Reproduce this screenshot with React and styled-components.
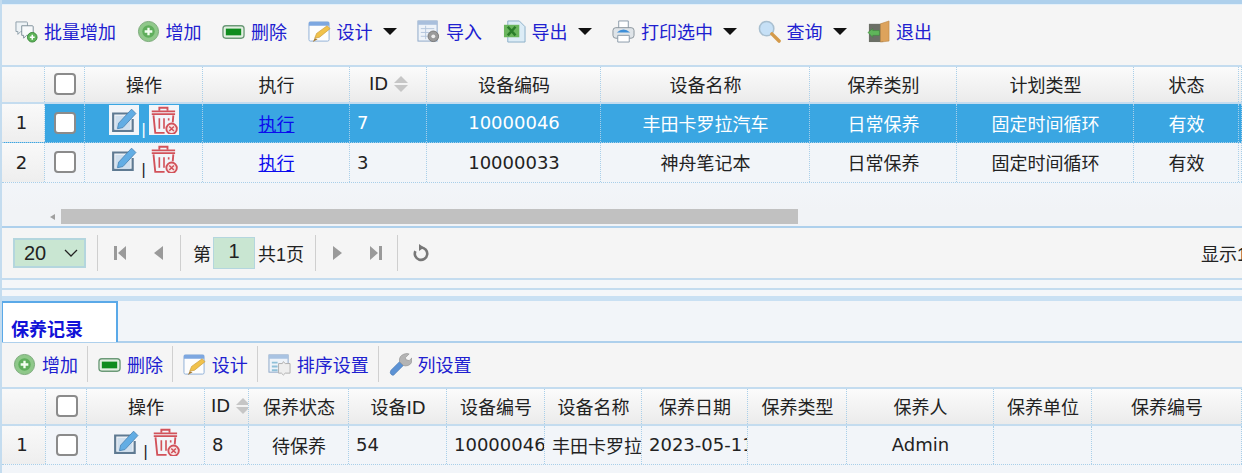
import React from 'react'
import styled, { createGlobalStyle, css } from 'styled-components'

const GlobalStyle = createGlobalStyle`
  html, body {
    margin: 0;
    width: 1242px;
    height: 473px;
    overflow: hidden;
    background: #f2f5f9;
    font-family: "DejaVu Sans", "Noto Sans CJK SC", sans-serif;
    font-size: 18px;
    color: #222;
  }
  * { box-sizing: border-box; }
`

const Page = styled.div`
  width: 1242px;
  height: 473px;
  overflow: hidden;
  border-left: 2px solid #c4dcef;
`
const TopStrip = styled.div`
  height: 5px;
  margin-left: -2px;
  background: #aed0ec;
  border-bottom: 1px solid #e4f0f9;
`
const Toolbar = styled.div`
  display: flex;
  align-items: ${p => (p.$compact ? 'center' : 'flex-start')};
  height: ${p => (p.$compact ? '46px' : '62px')};
  padding: ${p => (p.$compact ? '0 0 2px 11px' : '13px 0 0 13px')};
  gap: ${p => (p.$compact ? '0' : '20.5px')};
  background: #f5f5f5;
  border-bottom: 2px solid #c4dcef;
`
const ToolItem = styled.a`
  display: flex;
  align-items: center;
  gap: 6px;
  height: 26px;
  color: #2020d0;
  white-space: nowrap;
  flex-shrink: 0;
  ${p => p.$compact && css`
    height: 36px;
    padding-right: 8.9px;
    margin-right: 10px;
    border-right: 1px solid #d0d0d0;
    &:last-child { border-right: 0; }
  `}
`
const Caret = styled.span`
  width: 0;
  height: 0;
  margin-left: 4px;
  border-left: 7px solid transparent;
  border-right: 7px solid transparent;
  border-top: 7px solid #111;
`
const Row = styled.div`
  display: grid;
  grid-template-columns: ${p => p.$cols};
  height: ${p => p.$height}px;
  color: ${p => (p.$selected ? '#fff' : '#222')};
  background: ${p => (p.$selected ? '#3aa6e2' : '#f2f5f9')};
  border-bottom: 1px dotted #a9cfe9;
`
const HeadRow = styled(Row)`
  background: linear-gradient(#fbfbfb, #ebebeb);
  border-bottom: 2px solid #c4dcef;
`
const Cell = styled.div`
  display: flex;
  align-items: center;
  justify-content: ${p => (p.$left ? 'flex-start' : 'center')};
  padding-left: ${p => (p.$left ? '7px' : '1px')};
  padding-bottom: 1px;
  border-right: 1px dotted #a9cfe9;
  white-space: nowrap;
  overflow: hidden;
  min-width: 0;
`
const HeadCell = styled(Cell)`
  padding-bottom: 2px;
`
const NumCell = styled(Cell)`
  color: #222;
  background: linear-gradient(#f9f9f9, #eeeeee);
  padding-left: 0;
  padding-right: 3px;
`
const Check = styled.span`
  display: block;
  width: 22px;
  height: 22px;
  background: #fff;
  border: 2px solid #8b8b8b;
  border-radius: 4px;
`
const RunLink = styled.a`
  color: #0b0bee;
  text-decoration: underline;
`
const SortArrows = styled.span`
  display: flex;
  flex-direction: column;
  gap: 2px;
  margin-left: 6px;
  &::before, &::after {
    content: '';
    width: 0;
    border-left: 7px solid transparent;
    border-right: 7px solid transparent;
  }
  &::before { border-bottom: 7px solid #c6c6c6; }
  &::after { border-top: 7px solid #c6c6c6; }
`
const IdHeadCell = styled(HeadCell)`
  padding-left: 6px;
`
const ActionCell = styled(Cell)`
  align-items: flex-start;
  padding-top: 1px;
  padding-left: 0;
  padding-bottom: 0;
`
const ActionIcon = styled.span`
  display: flex;
  align-items: center;
  justify-content: center;
  width: 30px;
  height: 30px;
  background: ${p => (p.$selected ? '#f2f5f9' : 'transparent')};
`
const Pipe = styled.span`
  align-self: flex-end;
  width: 10px;
  margin-bottom: 4px;
  font: 16px/17px "Liberation Sans", sans-serif;
  text-align: center;
  color: ${p => (p.$selected ? '#fff' : '#222')};
`
const Empty = styled.div`
  height: 26px;
  background: linear-gradient(#f2f5f9, #f1f3f6);
`
const ScrollBar = styled.div`
  display: flex;
  align-items: center;
  height: 17px;
  padding-left: 48px;
  padding-bottom: 2px;
  background: #f1f3f6;
`
const ScrollArrow = styled.span`
  width: 0;
  height: 0;
  margin-right: 6px;
  border-top: 3px solid transparent;
  border-bottom: 3px solid transparent;
  border-right: 5px solid #a0a0a0;
`
const ScrollThumb = styled.span`
  width: 737px;
  height: 15px;
  background: #c1c1c1;
`
const Pager = styled.div`
  display: flex;
  align-items: center;
  height: 54px;
  padding-left: 11px;
  background: #f5f5f5;
  border-top: 2px solid #aed0ec;
  border-bottom: 2px solid #c4dcef;
  white-space: nowrap;
  overflow: hidden;
  & > * { flex-shrink: 0; }
`
const PageSize = styled.div`
  display: flex;
  align-items: center;
  justify-content: space-between;
  width: 73px;
  height: 30px;
  padding: 0 6px 0 9px;
  background: #c9e6d2;
  border: 2px solid #b4d6de;
  font: 20px "Liberation Sans", sans-serif;
`
const PagerSep = styled.span`
  width: 1px;
  height: 36px;
  margin: ${p => p.$margin};
  background: #cfcfcf;
`
const PagerButton = styled.span`
  display: flex;
  margin-right: ${p => p.$gap || 0}px;
`
const PageInput = styled.div`
  display: flex;
  align-items: center;
  justify-content: center;
  width: 42px;
  height: 32px;
  margin: 0 3px 0 2px;
  padding-bottom: 3px;
  background: #c9e6d2;
  border: 1px solid #b4d6de;
  font: 20px "Liberation Sans", sans-serif;
`
const PageText = styled.span`
  font-family: "Liberation Sans", "Noto Sans CJK SC", sans-serif;
`
const PagerInfo = styled.span`
  margin-left: 771px;
  font-family: "Liberation Sans", "Noto Sans CJK SC", sans-serif;
`
const Gap = styled.div`
  height: 10px;
  margin-left: -2px;
  background: #f4f6f9;
  border-bottom: 2px solid #c4dcef;
`
const Band = styled.div`
  height: 11px;
  margin-left: -2px;
  background: linear-gradient(#f4f6f9 0 6px, #c9e0f3 6px);
`
const TabBar = styled.div`
  display: flex;
  height: 42px;
  margin-left: -1px;
  background: #f2f5f9;
  border-bottom: 2px solid #aed0ec;
`
const Tab = styled.div`
  display: flex;
  align-items: flex-end;
  width: 117px;
  height: 41px;
  padding: 0 0 0 8px;
  background: #fff;
  border: 2px solid #5aa9e8;
  border-bottom: 0;
  color: #1212d8;
  font-weight: 700;
  line-height: 24px;
`

const TOP_COLS = '43px 40px 118px 147px 77px 174px 209px 147px 177px 105px 1fr'
const BOTTOM_COLS = '44px 41px 118px 44px 100px 98px 98px 97px 106px 99px 147px 98px 1fr'

const Icon = ({ size = 23, children }) => (
  <svg width={size} height={size} viewBox="0 0 24 24">{children}</svg>
)

const BatchIcon = () => (
  <Icon>
    <path d="M1 2h11a1 1 0 0 1 1 1v8a1 1 0 0 1-1 1H6l-3 3v-3H1z" fill="#eef3f6" stroke="#8fa0aa" />
    <path d="M7 6h11a1 1 0 0 1 1 1v8a1 1 0 0 1-1 1h-6l-3 3v-3H7z" fill="#f7f9fa" stroke="#7d8f99" />
    <circle cx="18" cy="18" r="5" fill="#5fb55a" stroke="#3d8a3e" />
    <path d="M15.5 18h5M18 15.5v5" stroke="#fff" strokeWidth="1.6" />
  </Icon>
)
const AddIcon = () => (
  <Icon>
    <circle cx="12" cy="12" r="10.5" fill="#8fc88a" stroke="#7ba87a" />
    <circle cx="12" cy="12" r="6.5" fill="#5fae5c" />
    <path d="M8 12h8M12 8v8" stroke="#f4fff2" strokeWidth="2.4" />
  </Icon>
)
const DeleteIcon = () => (
  <Icon>
    <rect x="1" y="6" width="22" height="13" rx="3" fill="#e2efe1" stroke="#6c9a78" strokeWidth="1.4" />
    <rect x="4" y="9" width="16" height="7" fill="#0f8c1e" />
  </Icon>
)
const DesignIcon = () => (
  <Icon>
    <rect x="1" y="2" width="21" height="20" rx="1.5" fill="#fdfdfd" stroke="#8fb0d6" />
    <rect x="1" y="2" width="21" height="4" fill="#7da7e0" />
    <path d="M7 19l2-5L20 6l3 3-11 9z" fill="#f1c24b" stroke="#c99a3a" strokeWidth=".7" />
    <path d="M5 23l2-4 3 1z" fill="#a67a34" />
  </Icon>
)
const ImportIcon = () => (
  <Icon>
    <rect x="1" y="1" width="20" height="21" fill="#eef3f9" stroke="#8ea8c8" />
    <rect x="1" y="1" width="20" height="4" fill="#a9bfdc" />
    <path d="M4 9h14M4 13h9M4 17h7M9 6v14" stroke="#b4c6dc" />
    <circle cx="17" cy="17" r="5.5" fill="#9a9a9a" stroke="#777" />
    <circle cx="17" cy="17" r="2" fill="#eee" />
  </Icon>
)
const ExportIcon = () => (
  <Icon>
    <path d="M5 1h12l6 6v16H5z" fill="#dcecf6" stroke="#8ab0c8" />
    <path d="M1 5h16v13H1z" fill="#6ab55d" />
    <path d="M5 7l8 9M13 7l-8 9" stroke="#2a7d2a" strokeWidth="2.6" />
  </Icon>
)
const PrintIcon = () => (
  <Icon>
    <path d="M7 1h10v8H7z" fill="#fff" stroke="#8a9aa8" />
    <rect x="1" y="8" width="22" height="11" rx="3" fill="#dfe4e8" stroke="#8a949c" />
    <path d="M5 13q7-6 14 0z" fill="#3f8fd8" />
    <path d="M6 16h12v7H6z" fill="#fff" stroke="#8a9aa8" />
  </Icon>
)
const SearchIcon = () => (
  <Icon>
    <circle cx="9" cy="9" r="7.5" fill="#c6e0f6" stroke="#a8bfd0" strokeWidth="1.6" />
    <path d="M14.5 14.5L22 22" stroke="#d49a4a" strokeWidth="3.6" strokeLinecap="round" />
  </Icon>
)
const ExitIcon = () => (
  <Icon>
    <path d="M2 4h15v19H2z" fill="#6b6f66" />
    <path d="M14 4l9-3v21l-9 1z" fill="#dda35c" stroke="#b98442" strokeWidth=".6" />
    <path d="M1 13l5-4v2h7v5H6v2z" fill="#5fb55a" stroke="#3d8a3e" strokeWidth=".6" />
  </Icon>
)
const SortIcon = () => (
  <Icon>
    <rect x="1" y="2" width="20" height="18" fill="#eef3f9" stroke="#8ea8c8" />
    <rect x="1" y="2" width="20" height="4" fill="#a9c3e2" />
    <path d="M4 10h6M4 14h6M4 18h6" stroke="#8fc0d8" strokeWidth="2" />
    <path d="M11 11h4l1-2 2 2h5v10h-5l-2 2-2-2h-3z" fill="#eeeeee" stroke="#b0b0b0" />
  </Icon>
)
const WrenchIcon = () => (
  <Icon>
    <path d="M3 23q-3-2-1-5l9-9 4 4-9 9q-1 2-3 1z" fill="#5c92d4" stroke="#4a78b0" strokeWidth=".6" />
    <path d="M11 9q-1-6 5-8 3-1 5 0l-4 4 1 2 3 1 3-3q1 6-4 8-3 1-5 0z" fill="#b4b4b4" stroke="#8c8c8c" strokeWidth=".6" />
  </Icon>
)
const EditIcon = () => (
  <Icon size={26}>
    <path d="M1 5h15v2H3v14h16V11h2v12H1z" fill="#5f7a92" />
    <path d="M4 8h11l-7 7-1 4 4-1 7-7v10H4z" fill="#cfdfee" />
    <path d="M7 15L19 2l4 4L11 19l-5 1z" fill="#62ade4" stroke="#4a84b4" strokeWidth=".8" />
  </Icon>
)
const TrashIcon = () => (
  <Icon size={28}>
    <g fill="none" stroke="#d2525a" strokeWidth="1.6">
      <path d="M8 4V1.5h7V4" />
      <path d="M1.5 4.5h20M1.5 7h20" strokeWidth="1.5" />
      <path d="M3 8l1.5 15h8M20 8l-.5 6" />
      <path d="M8 10.5v9M12 10.5v9M16 10.5v2" strokeWidth="1.4" />
      <circle cx="18.5" cy="19.5" r="4.5" fill="#f7e6e6" />
      <path d="M16.5 17.5l4 4M20.5 17.5l-4 4" strokeWidth="1.3" />
    </g>
  </Icon>
)

const Tri = ({ d }) => (
  <svg width="14" height="16" viewBox="0 0 14 16"><path d={d} fill="#9a9a9a" /></svg>
)
const ChevronIcon = () => (
  <svg width="14" height="8" viewBox="0 0 14 8"><path d="M1 1l6 6 6-6" fill="none" stroke="#222" strokeWidth="1.3" /></svg>
)
const RefreshIcon = () => (
  <svg width="18" height="18" viewBox="0 0 18 18">
    <path d="M9 3.5a6.2 6.2 0 1 1-5.6 3.6" fill="none" stroke="#777" strokeWidth="2.6" />
    <path d="M7 0l5 3.5L7 7z" fill="#777" />
  </svg>
)

const Tool = ({ icon, label, menu, compact }) => (
  <ToolItem $compact={compact}>
    {icon}
    {label}
    {menu && <Caret />}
  </ToolItem>
)

const Actions = ({ selected }) => (
  <ActionCell>
    <ActionIcon $selected={selected}><EditIcon /></ActionIcon>
    <Pipe $selected={selected}>|</Pipe>
    <ActionIcon $selected={selected}><TrashIcon /></ActionIcon>
  </ActionCell>
)

const topTools = [
  { icon: <BatchIcon />, label: '批量增加' },
  { icon: <AddIcon />, label: '增加' },
  { icon: <DeleteIcon />, label: '删除' },
  { icon: <DesignIcon />, label: '设计', menu: true },
  { icon: <ImportIcon />, label: '导入' },
  { icon: <ExportIcon />, label: '导出', menu: true },
  { icon: <PrintIcon />, label: '打印选中', menu: true },
  { icon: <SearchIcon />, label: '查询', menu: true },
  { icon: <ExitIcon />, label: '退出' },
]
const bottomTools = [
  { icon: <AddIcon />, label: '增加' },
  { icon: <DeleteIcon />, label: '删除' },
  { icon: <DesignIcon />, label: '设计' },
  { icon: <SortIcon />, label: '排序设置' },
  { icon: <WrenchIcon />, label: '列设置' },
]

const plans = [
  { n: 1, id: 7, code: '10000046', name: '丰田卡罗拉汽车', selected: true, height: 39 },
  { n: 2, id: 3, code: '10000033', name: '神舟笔记本', height: 40 },
]

const App = () => {
  return (
    <Page>
      <GlobalStyle />
      <TopStrip />
      <Toolbar>
        {topTools.map(t => <Tool key={t.label} {...t} />)}
      </Toolbar>

      <HeadRow $cols={TOP_COLS} $height={37}>
        <NumCell />
        <HeadCell><Check /></HeadCell>
        <HeadCell>操作</HeadCell>
        <HeadCell>执行</HeadCell>
        <HeadCell>ID<SortArrows /></HeadCell>
        <HeadCell>设备编码</HeadCell>
        <HeadCell>设备名称</HeadCell>
        <HeadCell>保养类别</HeadCell>
        <HeadCell>计划类型</HeadCell>
        <HeadCell>状态</HeadCell>
        <HeadCell />
      </HeadRow>
      {plans.map(p => (
        <Row key={p.n} $cols={TOP_COLS} $height={p.height} $selected={p.selected}>
          <NumCell>{p.n}</NumCell>
          <Cell><Check /></Cell>
          <Actions selected={p.selected} />
          <Cell><RunLink>执行</RunLink></Cell>
          <Cell $left>{p.id}</Cell>
          <Cell>{p.code}</Cell>
          <Cell>{p.name}</Cell>
          <Cell>日常保养</Cell>
          <Cell>固定时间循环</Cell>
          <Cell>有效</Cell>
          <Cell />
        </Row>
      ))}

      <Empty />
      <ScrollBar>
        <ScrollArrow />
        <ScrollThumb />
      </ScrollBar>

      <Pager>
        <PageSize>20<ChevronIcon /></PageSize>
        <PagerSep $margin="0 15px 0 11px" />
        <PagerButton $gap={24}><Tri d="M1 1h3v14H1zM13 1v14L5 8z" /></PagerButton>
        <PagerButton><Tri d="M12 1v14L3 8z" /></PagerButton>
        <PagerSep $margin="0 12px 0 15px" />
        <PageText>第</PageText>
        <PageInput>1</PageInput>
        <PageText>共1页</PageText>
        <PagerSep $margin="0 15px 0 11px" />
        <PagerButton $gap={24}><Tri d="M2 1v14l9-7z" /></PagerButton>
        <PagerButton><Tri d="M1 1v14l8-7zM10 1h3v14h-3z" /></PagerButton>
        <PagerSep $margin="0 14px 0 14px" />
        <RefreshIcon />
        <PagerInfo>显示1到2,共2记录</PagerInfo>
      </Pager>

      <Gap />
      <Band />
      <TabBar>
        <Tab>保养记录</Tab>
      </TabBar>
      <Toolbar $compact>
        {bottomTools.map(t => <Tool key={t.label} compact {...t} />)}
      </Toolbar>

      <HeadRow $cols={BOTTOM_COLS} $height={37}>
        <NumCell />
        <HeadCell><Check /></HeadCell>
        <HeadCell>操作</HeadCell>
        <IdHeadCell $left>ID<SortArrows /></IdHeadCell>
        <HeadCell>保养状态</HeadCell>
        <HeadCell>设备ID</HeadCell>
        <HeadCell>设备编号</HeadCell>
        <HeadCell>设备名称</HeadCell>
        <HeadCell>保养日期</HeadCell>
        <HeadCell>保养类型</HeadCell>
        <HeadCell>保养人</HeadCell>
        <HeadCell>保养单位</HeadCell>
        <HeadCell>保养编号</HeadCell>
      </HeadRow>
      <Row $cols={BOTTOM_COLS} $height={39}>
        <NumCell>1</NumCell>
        <Cell><Check /></Cell>
        <Actions />
        <Cell $left>8</Cell>
        <Cell>待保养</Cell>
        <Cell $left>54</Cell>
        <Cell $left>10000046</Cell>
        <Cell $left>丰田卡罗拉汽车</Cell>
        <Cell $left>2023-05-11</Cell>
        <Cell />
        <Cell>Admin</Cell>
        <Cell />
        <Cell />
      </Row>
    </Page>
  )
}

export default App
